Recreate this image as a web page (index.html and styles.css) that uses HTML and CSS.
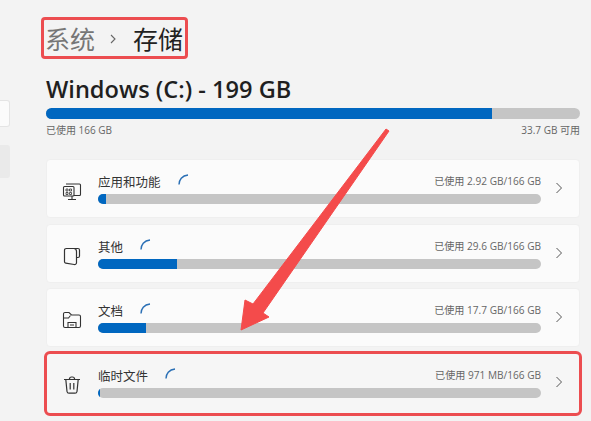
FILE: index.html
```html
<!DOCTYPE html>
<html lang="zh-CN">
<head>
    <meta charset="UTF-8">
    <title>存储</title>
    <link rel="stylesheet" href="styles.css">
</head>
<body>
    <div class="side">
        <div class="side-item"></div>
        <div class="side-item dim"></div>
    </div>

    <div class="main">
        <div class="crumb">
            <span class="crumb-parent">系统</span>
            <svg class="crumb-sep" width="8" height="10" viewBox="0 0 8 10"><path d="M2 1l4 4-4 4" fill="none" stroke="#666" stroke-width="1.1"/></svg>
            <span class="crumb-current">存储</span>
        </div>

        <h1 class="drive-title">Windows (C:) - 199 GB</h1>
        <div class="bar bar-big"><div class="bar-fill" style="width: 83.5%"></div></div>
        <div class="drive-info">
            <span>已使用 166 GB</span>
            <span>33.7 GB 可用</span>
        </div>

        <div class="list">
            <div class="card">
                <div class="card-icon">
                    <svg width="20" height="20" viewBox="0 0 20 20" fill="none" stroke="#333" stroke-width="1.1">
                        <path d="M4 3h13.500a1 1 0 0 1 1 1v9.500a1 1 0 0 1-1 1H12"/>
                        <rect x="1.500" y="5.500" width="10.500" height="9.500" rx="1"/>
                        <path d="M4 8h2v2H4zM7.500 8h2v2h-2zM4 11.500h2v2H4zM7.500 11.500h2v2h-2z" stroke-width=".8"/>
                        <path d="M10 15v3M6 18.500h8"/>
                    </svg>
                </div>
                <div class="card-body">
                    <div class="card-top">
                        <span class="card-name">应用和功能</span>
                        <svg class="spin" width="11" height="11" viewBox="0 0 11 11"><path d="M1 10.500C1 6 4 1.500 10 1" fill="none" stroke="#2a6fb5" stroke-width="1.400"/></svg>
                        <span class="card-used">已使用 2.92 GB/166 GB</span>
                    </div>
                    <div class="bar"><div class="bar-fill" style="width: 8px"></div></div>
                </div>
                <svg class="chev" width="8" height="12" viewBox="0 0 8 12"><path d="M1.500 1l5 5-5 5" fill="none" stroke="#555" stroke-width="1"/></svg>
            </div>

            <div class="card">
                <div class="card-icon">
                    <svg width="20" height="20" viewBox="0 0 20 20" fill="none" stroke="#333" stroke-width="1.200">
                        <path d="M4.500 2.500h11.500a1.500 1.500 0 0 1 1.500 1.500v6a1.500 1.500 0 0 1-1.500 1.500h-1.500"/>
                        <path d="M4.500 2.500c-1.200 0-2 .8-2 1.800v11.500c0 .8.500 1.300 1.200 1.400l8.500 1.300c1.200.2 2.300-.6 2.300-1.800V5.500c0-1.700-1-2.900-2.500-3z"/>
                    </svg>
                </div>
                <div class="card-body">
                    <div class="card-top">
                        <span class="card-name">其他</span>
                        <svg class="spin" width="11" height="11" viewBox="0 0 11 11"><path d="M1 10.500C1 6 4 1.500 10 1" fill="none" stroke="#2a6fb5" stroke-width="1.400"/></svg>
                        <span class="card-used">已使用 29.6 GB/166 GB</span>
                    </div>
                    <div class="bar"><div class="bar-fill" style="width: 79px"></div></div>
                </div>
                <svg class="chev" width="8" height="12" viewBox="0 0 8 12"><path d="M1.500 1l5 5-5 5" fill="none" stroke="#555" stroke-width="1"/></svg>
            </div>

            <div class="card">
                <div class="card-icon">
                    <svg width="20" height="20" viewBox="0 0 20 20" fill="none" stroke="#333" stroke-width="1.100">
                        <path d="M1.500 6V4a1.500 1.500 0 0 1 1.500-1.500h4l2.500 2.500H17a1.500 1.500 0 0 1 1.500 1.500V16a1.500 1.500 0 0 1-1.500 1.500H3A1.500 1.500 0 0 1 1.500 16z"/>
                        <path d="M1.500 8h5l2-2.500"/>
                        <path d="M6 17.500V12.500h8v5M8 15h4"/>
                    </svg>
                </div>
                <div class="card-body">
                    <div class="card-top">
                        <span class="card-name">文档</span>
                        <svg class="spin" width="11" height="11" viewBox="0 0 11 11"><path d="M1 10.500C1 6 4 1.500 10 1" fill="none" stroke="#2a6fb5" stroke-width="1.400"/></svg>
                        <span class="card-used">已使用 17.7 GB/166 GB</span>
                    </div>
                    <div class="bar"><div class="bar-fill" style="width: 48px"></div></div>
                </div>
                <svg class="chev" width="8" height="12" viewBox="0 0 8 12"><path d="M1.500 1l5 5-5 5" fill="none" stroke="#555" stroke-width="1"/></svg>
            </div>

            <div class="card card-marked">
                <div class="card-icon">
                    <svg width="20" height="20" viewBox="0 0 20 20" fill="none" stroke="#333" stroke-width="1.200">
                        <path d="M2 4.500h16M7.500 4.500V3.500a2 2 0 0 1 2-1.500h1a2 2 0 0 1 2 1.500v1"/>
                        <path d="M3.800 4.500l1.200 12a2 2 0 0 0 2 1.700h6a2 2 0 0 0 2-1.700l1.200-12"/>
                        <path d="M8.200 8v6.500M11.800 8v6.500"/>
                    </svg>
                </div>
                <div class="card-body">
                    <div class="card-top">
                        <span class="card-name">临时文件</span>
                        <svg class="spin" width="11" height="11" viewBox="0 0 11 11"><path d="M1 10.500C1 6 4 1.500 10 1" fill="none" stroke="#2a6fb5" stroke-width="1.400"/></svg>
                        <span class="card-used">已使用 971 MB/166 GB</span>
                    </div>
                    <div class="bar"><div class="bar-fill" style="width: 2px"></div></div>
                </div>
                <svg class="chev" width="8" height="12" viewBox="0 0 8 12"><path d="M1.500 1l5 5-5 5" fill="none" stroke="#555" stroke-width="1"/></svg>
            </div>
        </div>
    </div>

    <!-- red arrow drawn over the list -->
    <svg class="arrow" width="591" height="421" viewBox="0 0 591 421">
        <path d="M386 129l3 2L263 313l6 4-28 13 4-30 8 4z" fill="#f44b4b" stroke="#f44b4b" stroke-width="1" stroke-linejoin="round"/>
    </svg>
</body>
</html>
```

FILE: styles.css
```css
* {
    box-sizing: border-box;
}

body {
    margin: 0;
    width: 591px;
    height: 421px;
    overflow: hidden;
    display: flex;
    background-color: #f3f3f3;
    font-family: "Open Sans", "Noto Sans CJK SC", sans-serif;
    color: #222;
}

.side {
    width: 46px;
    flex-shrink: 0;
    padding-top: 100px;
}

.side-item {
    width: 10px;
    height: 27px;
    background-color: #fbfbfb;
    border: 1px solid #e4e4e4;
    border-left: none;
    border-radius: 0 3px 3px 0;
}

.side-item.dim {
    height: 33px;
    margin-top: 18px;
    background-color: #eaeaea;
    border: none;
}

.main {
    width: 534px;
}

.crumb {
    display: flex;
    align-items: center;
    width: 147px;
    height: 42px;
    margin: 17px 0 0 -5px;
    padding-left: 1px;
    border: 3px solid #ec4d50;
    border-radius: 4px;
    font-family: "Noto Sans CJK SC", sans-serif;
    font-size: 25px;
    white-space: nowrap;
}

.crumb-parent {
    color: #767676;
}

.crumb-sep {
    flex-shrink: 0;
    margin: 2px 16px 0 14px;
}

.crumb-current {
    color: #222;
}

.drive-title {
    margin: 17px 0 0;
    font-size: 23.6px;
    line-height: 26px;
    font-weight: 600;
    color: #1f1f1f;
}

.bar {
    height: 10px;
    border-radius: 5px;
    background-color: #c5c5c5;
    overflow: hidden;
}

.bar-fill {
    height: 100%;
    background-color: #0067c0;
}

.bar-big {
    height: 11px;
    margin-top: 6px;
    border-radius: 6px;
}

.drive-info {
    display: flex;
    justify-content: space-between;
    margin-top: 4px;
    font-size: 10px;
    line-height: 14px;
    color: #666;
}

.list {
    display: flex;
    flex-direction: column;
    gap: 5.5px;
    margin-top: 22px;
}

.card {
    display: flex;
    height: 59px;
    background-color: #fbfbfb;
    border: 1px solid #efefef;
    border-radius: 4px;
}

.card-marked {
    height: 61px;
    background-color: #f6f6f6;
    border-color: transparent;
    outline: 3px solid #ec4d50;
    outline-offset: -1px;
}

.card-icon {
    width: 51px;
    flex-shrink: 0;
    padding: 21px 0 0 15px;
}

.card-icon svg {
    display: block;
}

.card-body {
    width: 443px;
    padding-top: 14px;
}

.card-top {
    display: flex;
    align-items: flex-start;
    height: 20px;
}

.card-name {
    font-family: "Noto Sans CJK SC", sans-serif;
    font-size: 12.5px;
    line-height: 16px;
    color: #333;
}

.spin {
    margin-left: 17px;
}

.card-used {
    margin: 0 0 0 auto;
    font-size: 10.1px;
    line-height: 14px;
    color: #666;
}

.chev {
    margin: 22px 0 0 14px;
}

.arrow {
    position: absolute;
    top: 0;
    left: 0;
    pointer-events: none;
}
```
